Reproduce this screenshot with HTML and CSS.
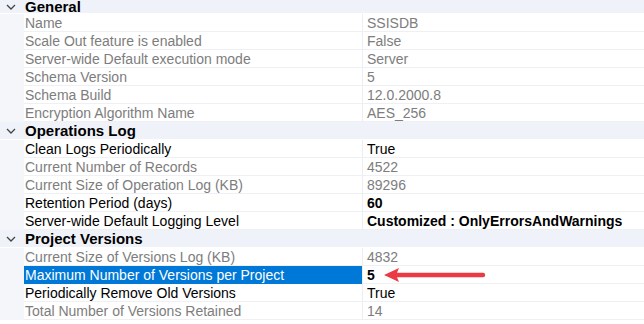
FILE: index.html
```html
<!DOCTYPE html>
<html lang="en">
<head>
    <meta charset="UTF-8">
    <title>Catalog Properties</title>
    <link rel="stylesheet" href="styles.css">
</head>
<body>
    <div class="grid">
        <div class="cat first">
            <span class="gutter"><svg width="10" height="6" viewBox="0 0 10 6"><polyline points="1,1 5,5 9,1" fill="none" stroke="#444" stroke-width="1.3"/></svg></span>
            <span class="cat-name">General</span>
        </div>
        <div class="row ro"><span class="gutter"></span><span class="name">Name</span><span class="val">SSISDB</span></div>
        <div class="row ro"><span class="gutter"></span><span class="name">Scale Out feature is enabled</span><span class="val">False</span></div>
        <div class="row ro"><span class="gutter"></span><span class="name">Server-wide Default execution mode</span><span class="val">Server</span></div>
        <div class="row ro"><span class="gutter"></span><span class="name">Schema Version</span><span class="val">5</span></div>
        <div class="row ro"><span class="gutter"></span><span class="name">Schema Build</span><span class="val">12.0.2000.8</span></div>
        <div class="row ro"><span class="gutter"></span><span class="name">Encryption Algorithm Name</span><span class="val">AES_256</span></div>

        <div class="cat">
            <span class="gutter"><svg width="10" height="6" viewBox="0 0 10 6"><polyline points="1,1 5,5 9,1" fill="none" stroke="#444" stroke-width="1.3"/></svg></span>
            <span class="cat-name">Operations Log</span>
        </div>
        <div class="row"><span class="gutter"></span><span class="name">Clean Logs Periodically</span><span class="val">True</span></div>
        <div class="row ro"><span class="gutter"></span><span class="name">Current Number of Records</span><span class="val">4522</span></div>
        <div class="row ro"><span class="gutter"></span><span class="name">Current Size of Operation Log (KB)</span><span class="val">89296</span></div>
        <div class="row"><span class="gutter"></span><span class="name">Retention Period (days)</span><span class="val changed">60</span></div>
        <div class="row"><span class="gutter"></span><span class="name">Server-wide Default Logging Level</span><span class="val changed">Customized : OnlyErrorsAndWarnings</span></div>

        <div class="cat">
            <span class="gutter"><svg width="10" height="6" viewBox="0 0 10 6"><polyline points="1,1 5,5 9,1" fill="none" stroke="#444" stroke-width="1.3"/></svg></span>
            <span class="cat-name">Project Versions</span>
        </div>
        <div class="row ro"><span class="gutter"></span><span class="name">Current Size of Versions Log (KB)</span><span class="val">4832</span></div>
        <div class="row selected"><span class="gutter"></span><span class="name">Maximum Number of Versions per Project</span><span class="val changed">5
            <svg class="arrow" width="104" height="16" viewBox="0 0 104 16"><path d="M1 8 L16 1 L14 5.8 L100 5.8 A2.2 2.2 0 0 1 100 10.2 L14 10.2 L16 15 Z" fill="#ec3a44"/></svg></span></div>
        <div class="row"><span class="gutter"></span><span class="name">Periodically Remove Old Versions</span><span class="val">True</span></div>
        <div class="row ro"><span class="gutter"></span><span class="name">Total Number of Versions Retained</span><span class="val">14</span></div>
    </div>
</body>
</html>
```

FILE: styles.css
```css
body {
    margin: 0;
    background: #fff;
    font-family: "Liberation Sans", Arial, sans-serif;
    font-size: 14px;
    color: #000;
}
.row,
.cat {
    display: grid;
    grid-template-columns: 24px 339px 1fr;
    height: 18px;
    box-sizing: border-box;
    border-bottom: 1px solid #eef0f4;
    line-height: 18px;
}
.cat {
    grid-template-columns: 24px 1fr;
    background: #eff3f9;
    border-bottom-color: #fff;
}
.cat.first {
    height: 14px;
}
.cat-name {
    font-weight: bold;
    font-size: 15px;
    padding-left: 1px;
    line-height: 17px;
}
.cat.first .cat-name {
    line-height: 13px;
}
.gutter {
    background: #f4f6f9;
    display: flex;
    justify-content: center;
    align-items: center;
    padding-right: 2px;
}
.cat .gutter {
    background: transparent;
}
.name {
    padding-left: 1px;
    border-right: 1px solid #eceef2;
    white-space: nowrap;
    overflow: hidden;
}
.val {
    padding-left: 4px;
    white-space: nowrap;
    display: flex;
    align-items: center;
}
.ro {
    color: #7d7d7d;
}
.changed {
    font-weight: bold;
}
.selected .name {
    background: #0078d7;
    color: #fff;
}
.arrow {
    margin-left: 8px;
}
```
